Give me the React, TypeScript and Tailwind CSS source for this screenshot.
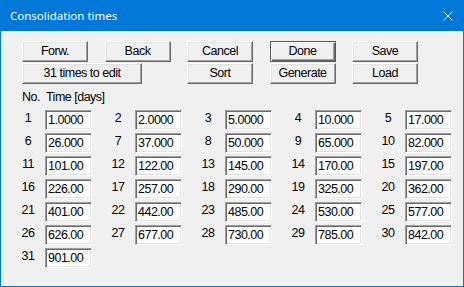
import React from 'react';

const times = [
  '1.0000', '2.0000', '5.0000', '10.000', '17.000',
  '26.000', '37.000', '50.000', '65.000', '82.000',
  '101.00', '122.00', '145.00', '170.00', '197.00',
  '226.00', '257.00', '290.00', '325.00', '362.00',
  '401.00', '442.00', '485.00', '530.00', '577.00',
  '626.00', '677.00', '730.00', '785.00', '842.00',
  '901.00',
];

function Btn({ label, wide, primary }: { label: string; wide?: boolean; primary?: boolean }) {
  return (
    <button
      className={
        'h-[21px] bg-[#f0f0f0] text-black leading-none flex items-center justify-center ' +
        (wide ? 'w-[120px] col-span-2 ' : 'w-[66px] ') +
        (primary
          ? 'border border-[#5a5a5a] shadow-[inset_1px_1px_0_#ffffff,inset_-1px_-1px_0_#696969,inset_-2px_-2px_0_#a0a0a0]'
          : 'border border-t-white border-l-white border-r-[#696969] border-b-[#696969] shadow-[inset_-1px_-1px_0_#a0a0a0,inset_1px_1px_0_#e3e3e3]')
      }
    >
      {label}
    </button>
  );
}

export default function App() {
  return (
    <div
      className="w-[464px] h-[287px] bg-[#0078d7] flex flex-col text-[12.5px] tracking-[-0.5px] text-black"
      style={{ fontFamily: '"Liberation Sans", Arial, sans-serif' }}
    >
      {/* Title bar */}
      <div className="h-[31px] flex items-center justify-between pl-[10px] pr-[11px] text-white">
        <span
          className="text-[11.5px] tracking-normal"
          style={{ fontFamily: '"Noto Sans", "Open Sans", sans-serif' }}
        >
          Consolidation times
        </span>
        <svg width="10" height="10" viewBox="0 0 10 10">
          <path d="M0.5 0.5L9.5 9.5M9.5 0.5L0.5 9.5" stroke="#ffffff" strokeWidth="1" fill="none" />
        </svg>
      </div>

      {/* Body */}
      <div className="flex-1 bg-[#f0f0f0] mx-px mb-px">
        <div className="pt-[10px] pl-[21px] grid grid-cols-[66px_66px_66px_66px_66px] gap-x-[16.5px] gap-y-px">
          <Btn label="Forw." />
          <Btn label="Back" />
          <Btn label="Cancel" />
          <Btn label="Done" primary />
          <Btn label="Save" />
          <Btn label="31 times to edit" wide />
          <Btn label="Sort" />
          <Btn label="Generate" />
          <Btn label="Load" />
        </div>

        <div className="mt-[6px] pl-[21px] flex gap-[6px] leading-[14px]">
          <span>No.</span>
          <span>Time [days]</span>
        </div>

        <div className="mt-[6px] pl-[10px] grid grid-cols-[90px_90px_90px_90px_90px] gap-y-[3px]">
          {times.map((t, i) => (
            <div key={i} className="flex items-center h-[20px]">
              <span className="w-[34px] text-center leading-none -mt-[3px]">{i + 1}</span>
              <div className="w-[47px] h-[20px] bg-white flex items-center pl-[2px] leading-none border border-t-[#a0a0a0] border-l-[#a0a0a0] border-r-white border-b-white shadow-[inset_1px_1px_0_#696969,inset_-1px_-1px_0_#e3e3e3]">
                {t}
              </div>
            </div>
          ))}
        </div>
      </div>
    </div>
  );
}
